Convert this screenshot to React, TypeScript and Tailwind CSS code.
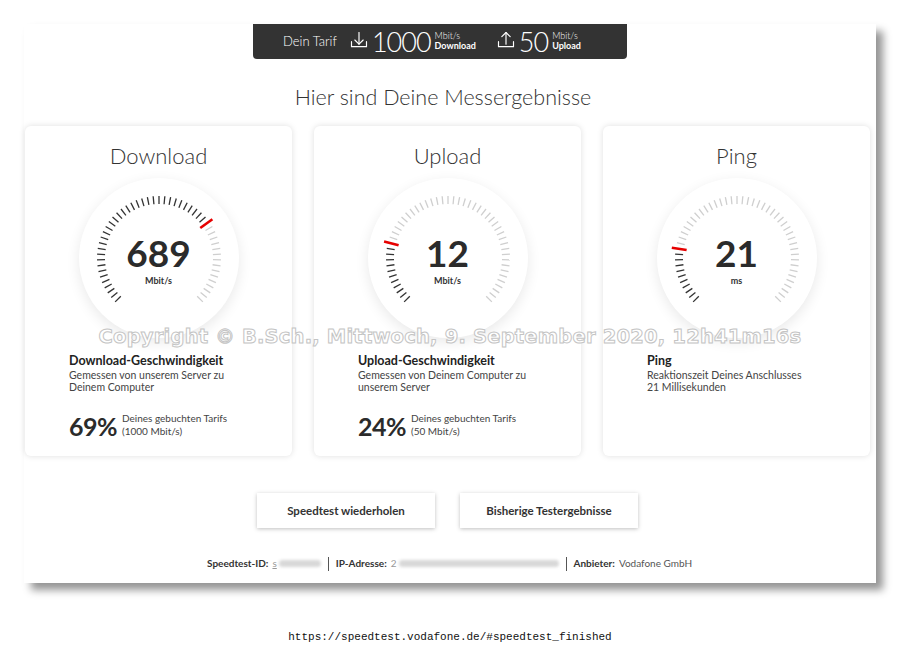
import React from "react";

const FONT = "font-['Lato','Open_Sans',sans-serif]";

function TrayIcon({ up = false }: { up?: boolean }) {
  return (
    <svg width="20" height="20" viewBox="0 0 24 24" fill="none" stroke="#fff" strokeWidth="1.4" strokeLinecap="round" strokeLinejoin="round">
      <path d="M3 14v6h18v-6" />
      {up ? (
        <>
          <path d="M12 17V3" />
          <path d="M7 8l5-5 5 5" />
        </>
      ) : (
        <>
          <path d="M12 3v14" />
          <path d="M7 12l5 5 5-5" />
        </>
      )}
    </svg>
  );
}

function Gauge({ value, unit, pct }: { value: string; unit: string; pct: number }) {
  const N = 51;
  const red = Math.round(pct * (N - 1));
  const ticks = Array.from({ length: N }, (_, i) => {
    const a = ((-135 + (i * 270) / (N - 1)) * Math.PI) / 180;
    const isRed = i === red;
    const r1 = isRed ? 51 : 54;
    const r2 = isRed ? 66 : 62;
    return (
      <line
        key={i}
        x1={Math.sin(a) * r1}
        y1={-Math.cos(a) * r1}
        x2={Math.sin(a) * r2}
        y2={-Math.cos(a) * r2}
        stroke={isRed ? "#e60000" : i < red ? "#333" : "#cfcfcf"}
        strokeWidth={isRed ? 2.6 : 1.3}
      />
    );
  });
  return (
    <div className="relative w-[160px] h-[160px] rounded-full bg-white shadow-[0_4px_14px_rgba(0,0,0,0.09)]">
      <svg className="absolute inset-0" width="160" height="160" viewBox="-80 -80 160 160">
        {ticks}
      </svg>
      <div className="absolute inset-0 flex flex-col items-center justify-center pt-[6px]">
        <div className="text-[37px] leading-none font-bold text-[#2b2b2b]">{value}</div>
        <div className="text-[9px] font-bold text-[#333] mt-[3px]">{unit}</div>
      </div>
    </div>
  );
}

function Card({
  title,
  value,
  unit,
  pct,
  heading,
  lines,
  percent,
  tarif,
}: {
  title: string;
  value: string;
  unit: string;
  pct: number;
  heading: string;
  lines: string[];
  percent?: string;
  tarif?: string;
}) {
  return (
    <div className="w-[267px] h-[330px] bg-white rounded-md shadow-[0_0_6px_rgba(0,0,0,0.13)] flex flex-col">
      <div className="text-center text-[22px] font-light text-[#333] pt-[16px] leading-[28px]">{title}</div>
      <div className="flex justify-center mt-[8px]">
        <Gauge value={value} unit={unit} pct={pct} />
      </div>
      <div className="pl-[44px] pt-[15px]">
        <div className="text-[12.5px] font-bold text-[#222] leading-[16px]">{heading}</div>
        {lines.map((l) => (
          <div key={l} className="text-[10.5px] text-[#444] leading-[12px]">
            {l}
          </div>
        ))}
        {percent && (
          <div className="flex items-center mt-[21px]">
            <span className="text-[25px] font-bold text-[#2b2b2b] leading-none tracking-[-0.5px]">{percent}</span>
            <div className="ml-[5px] text-[10px] text-[#444] leading-[13px] -mt-[4px]">
              <div>Deines gebuchten Tarifs</div>
              <div>{tarif}</div>
            </div>
          </div>
        )}
      </div>
    </div>
  );
}

export default function App() {
  return (
    <div className={`w-[900px] h-[667px] bg-white relative overflow-hidden ${FONT}`}>
      <div className="ml-[24px] mt-[24px] w-[852px] h-[559px] bg-white shadow-[7px_7px_8px_rgba(0,0,0,0.42)] flex flex-col">
        {/* tariff bar */}
        <div className="ml-[229px] w-[374px] h-[35px] bg-[#333] rounded-b-[4px] flex items-center text-white pl-[30px]">
          <span className="text-[13px] font-light">Dein Tarif</span>
          <div className="ml-[12px] mt-[-3px]">
            <TrayIcon />
          </div>
          <span className="ml-[3px] text-[27px] font-light leading-none tracking-[-1px]">1000</span>
          <div className="ml-[4px] flex flex-col leading-[10px] -mt-[2px]">
            <span className="text-[9px] font-light">Mbit/s</span>
            <span className="text-[9px] font-bold">Download</span>
          </div>
          <div className="ml-[20px] mt-[-3px]">
            <TrayIcon up />
          </div>
          <span className="ml-[3px] text-[27px] font-light leading-none tracking-[-1px]">50</span>
          <div className="ml-[4px] flex flex-col leading-[10px] -mt-[2px]">
            <span className="text-[9px] font-light">Mbit/s</span>
            <span className="text-[9px] font-bold">Upload</span>
          </div>
        </div>

        <div className="text-center text-[21.5px] font-light text-[#333] mt-[24px] leading-[28px] pr-[14px]">
          Hier sind Deine Messergebnisse
        </div>

        {/* cards */}
        <div className="flex gap-[22px] pl-px mt-[15px]">
          <Card
            title="Download"
            value="689"
            unit="Mbit/s"
            pct={0.695}
            heading="Download-Geschwindigkeit"
            lines={["Gemessen von unserem Server zu", "Deinem Computer"]}
            percent="69%"
            tarif="(1000 Mbit/s)"
          />
          <Card
            title="Upload"
            value="12"
            unit="Mbit/s"
            pct={0.215}
            heading="Upload-Geschwindigkeit"
            lines={["Gemessen von Deinem Computer zu", "unserem Server"]}
            percent="24%"
            tarif="(50 Mbit/s)"
          />
          <Card
            title="Ping"
            value="21"
            unit="ms"
            pct={0.2}
            heading="Ping"
            lines={["Reaktionszeit Deines Anschlusses", "21 Millisekunden"]}
          />
        </div>

        {/* buttons */}
        <div className="flex justify-center gap-[25px] mt-[37px] pr-[5px]">
          <button className="w-[178px] h-[35px] bg-white shadow-[0_1px_4px_rgba(0,0,0,0.25)] text-[11.5px] font-bold text-[#333]">
            Speedtest wiederholen
          </button>
          <button className="w-[178px] h-[35px] bg-white shadow-[0_1px_4px_rgba(0,0,0,0.25)] text-[11.5px] font-bold text-[#333]">
            Bisherige Testergebnisse
          </button>
        </div>

        {/* footer */}
        <div className="flex items-center ml-[183px] mt-[28px] text-[10px] text-[#333]">
          <span className="font-bold">Speedtest-ID:</span>
          <span className="ml-[4px] underline text-[#999]">s</span>
          <span className="ml-[2px] w-[42px] h-[7px] bg-[#d8d8d8] blur-[1.5px] rounded"></span>
          <span className="ml-[7px] w-px h-[14px] bg-[#555]"></span>
          <span className="ml-[7px] font-bold">IP-Adresse:</span>
          <span className="ml-[4px] text-[#999]">2</span>
          <span className="ml-[2px] w-[160px] h-[7px] bg-[#d8d8d8] blur-[1.5px] rounded"></span>
          <span className="ml-[7px] w-px h-[14px] bg-[#555]"></span>
          <span className="ml-[7px] font-bold">Anbieter:</span>
          <span className="ml-[4px] text-[#555]">Vodafone GmbH</span>
        </div>
      </div>

      {/* watermark overlay */}
      <div className="absolute left-0 right-0 top-[322px] text-center font-['DejaVu_Sans',sans-serif] font-bold text-[19.5px] text-white [-webkit-text-stroke:1px_#c4c4c4] tracking-[0.2px]">
        Copyright © B.Sch., Mittwoch, 9. September 2020, 12h41m16s
      </div>

      <div className="absolute left-0 right-0 top-[629px] text-center font-['Liberation_Mono',monospace] text-[11px] text-[#111]">
        https://speedtest.vodafone.de/#speedtest_finished
      </div>
    </div>
  );
}
